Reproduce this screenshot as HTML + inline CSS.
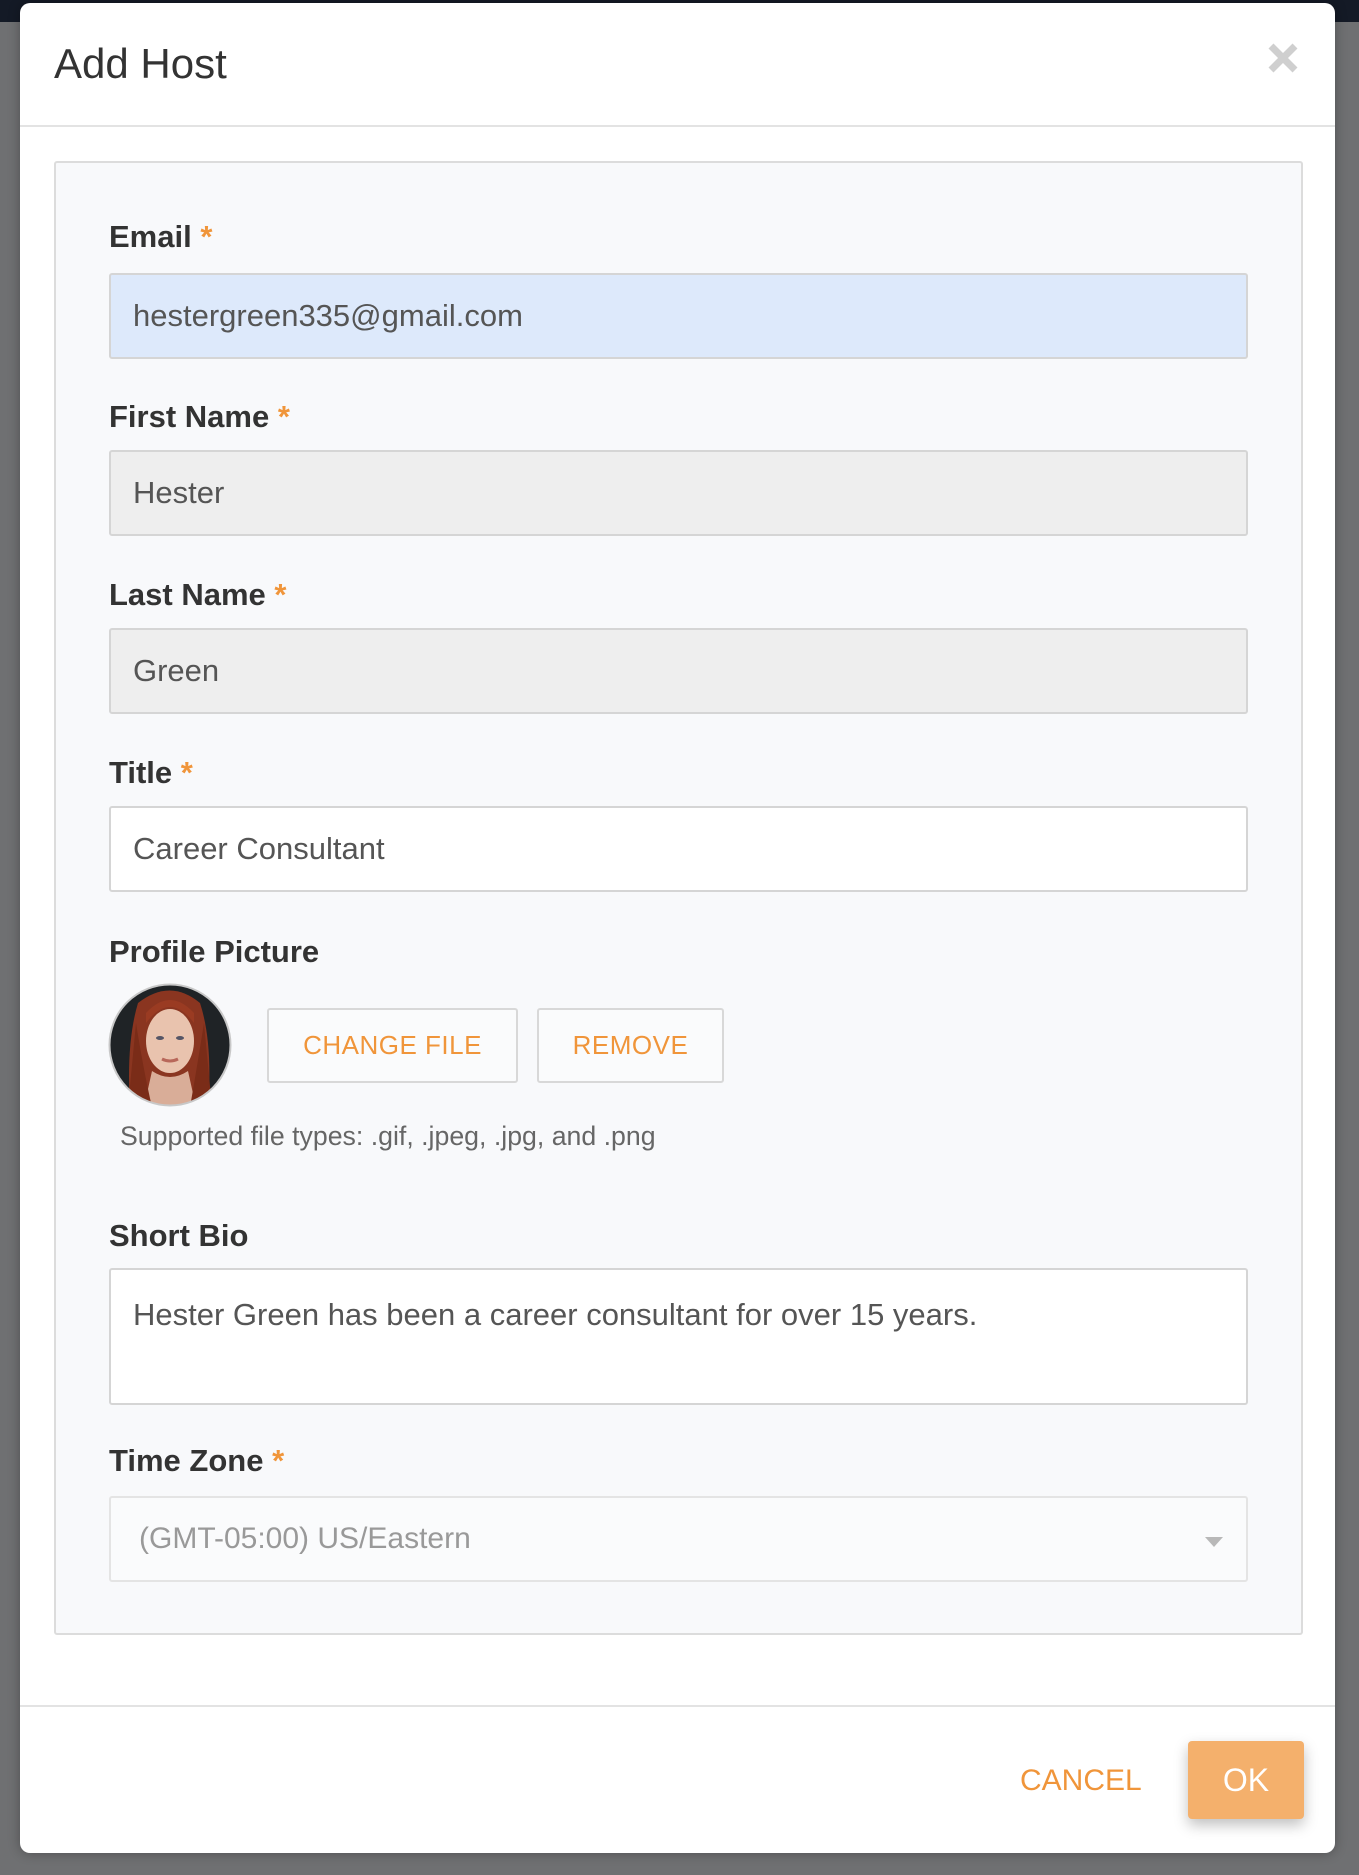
<!DOCTYPE html>
<html><head><meta charset="utf-8">
<style>
*{box-sizing:border-box;margin:0;padding:0}
html,body{width:1359px;height:1875px;overflow:hidden}
body{background:#6f7072;font-family:"Liberation Sans",sans-serif;position:relative}
.top{position:absolute;left:0;top:0;width:1359px;height:22px;background:#141a26}
.modal{position:absolute;left:20px;top:3px;width:1315px;height:1850px;background:#fff;border-radius:10px;box-shadow:0 0 12px rgba(0,0,0,.3)}
.abs{position:absolute}
h1{position:absolute;left:34px;top:37px;font-size:42px;font-weight:normal;color:#333}
.hline{position:absolute;left:0;width:1315px;height:2px;background:#e3e3e3}
.panel{position:absolute;left:34px;top:158px;width:1249px;height:1474px;background:#f8f9fb;border:2px solid #dcdcdc;border-radius:3px}
.lbl{position:absolute;left:89px;font-size:31px;font-weight:bold;color:#333}
.lbl span{color:#f0953a}
.inp{position:absolute;left:89px;width:1139px;height:86px;border:2px solid #d5d5d5;border-radius:3px;font-size:31px;color:#555;padding-left:22px;line-height:82px}
.btn{position:absolute;top:1005px;height:75px;border:2px solid #d8d8d8;border-radius:3px;background:#fafbfc;color:#f0953a;font-size:26px;letter-spacing:0.5px;text-align:center;line-height:71px}
</style></head><body>
<div class="top"></div>
<div class="modal">
<h1>Add Host</h1>
<svg class="abs" style="left:1247px;top:39px" width="32" height="32" viewBox="0 0 32 32"><path d="M4 4L28 28M28 4L4 28" stroke="#cfcfcf" stroke-width="7"/></svg>
<div class="hline" style="top:122px"></div>
<div class="panel"></div>
<div class="lbl" style="top:216px">Email <span>*</span></div>
<div class="inp" style="top:270px;background:#dde9fb">hestergreen335@gmail.com</div>
<div class="lbl" style="top:396px">First Name <span>*</span></div>
<div class="inp" style="top:447px;background:#eeeeee">Hester</div>
<div class="lbl" style="top:574px">Last Name <span>*</span></div>
<div class="inp" style="top:625px;background:#eeeeee">Green</div>
<div class="lbl" style="top:752px">Title <span>*</span></div>
<div class="inp" style="top:803px;background:#fff">Career Consultant</div>
<div class="lbl" style="top:931px">Profile Picture</div>
<svg class="abs" style="left:88px;top:980px" width="124" height="124" viewBox="0 0 124 124">
<defs><clipPath id="c"><circle cx="62" cy="62" r="60"/></clipPath></defs>
<g clip-path="url(#c)">
<rect width="124" height="124" fill="#1f2326"/>
<path d="M30 20 Q62 -5 92 20 Q105 60 100 124 L22 124 Q18 60 30 20Z" fill="#8a3520"/>
<ellipse cx="62" cy="58" rx="24" ry="32" fill="#e9c3ae"/>
<path d="M38 40 Q62 8 86 40 L86 30 Q62 4 38 30Z" fill="#9a3b22"/>
<ellipse cx="52" cy="55" rx="4" ry="2" fill="#556"/><ellipse cx="72" cy="55" rx="4" ry="2" fill="#556"/>
<path d="M54 76 Q62 80 70 76" stroke="#b8675a" stroke-width="3" fill="none"/>
<path d="M44 88 Q62 100 80 88 L88 124 L36 124Z" fill="#d9ad98"/>
<path d="M28 40 Q36 90 44 124 L20 124Z M96 40 Q88 90 82 124 L104 124Z" fill="#7a2c18"/>
</g>
<circle cx="62" cy="62" r="60.5" fill="none" stroke="#c8c8c8" stroke-width="2"/>
</svg>
<div class="btn" style="left:247px;width:251px">CHANGE FILE</div>
<div class="btn" style="left:517px;width:187px">REMOVE</div>
<div class="abs" style="left:100px;top:1118px;font-size:26.7px;color:#666">Supported file types: .gif, .jpeg, .jpg, and .png</div>
<div class="lbl" style="top:1215px">Short Bio</div>
<div class="inp" style="top:1265px;height:137px;background:#fff;line-height:1;padding-top:29px">Hester Green has been a career consultant for over 15 years.</div>
<div class="lbl" style="top:1440px">Time Zone <span>*</span></div>
<div class="inp" style="top:1493px;background:#fafbfc;border-color:#e4e4e4;color:#999;padding-left:28px;font-size:30px">(GMT-05:00) US/Eastern</div>
<svg class="abs" style="left:1185px;top:1534px" width="18" height="10" viewBox="0 0 18 10"><path d="M0 0H18L9 10Z" fill="#b8b8b8"/></svg>
<div class="hline" style="top:1702px"></div>
<div class="abs" style="left:1000px;top:1761px;font-size:30px;color:#f0953a">CANCEL</div>
<div class="abs" style="left:1168px;top:1738px;width:116px;height:78px;background:#f4b06c;border-radius:4px;box-shadow:0 6px 14px rgba(0,0,0,.25);color:#fff;font-size:32px;text-align:center;line-height:78px">OK</div>
</div>
</body></html>
